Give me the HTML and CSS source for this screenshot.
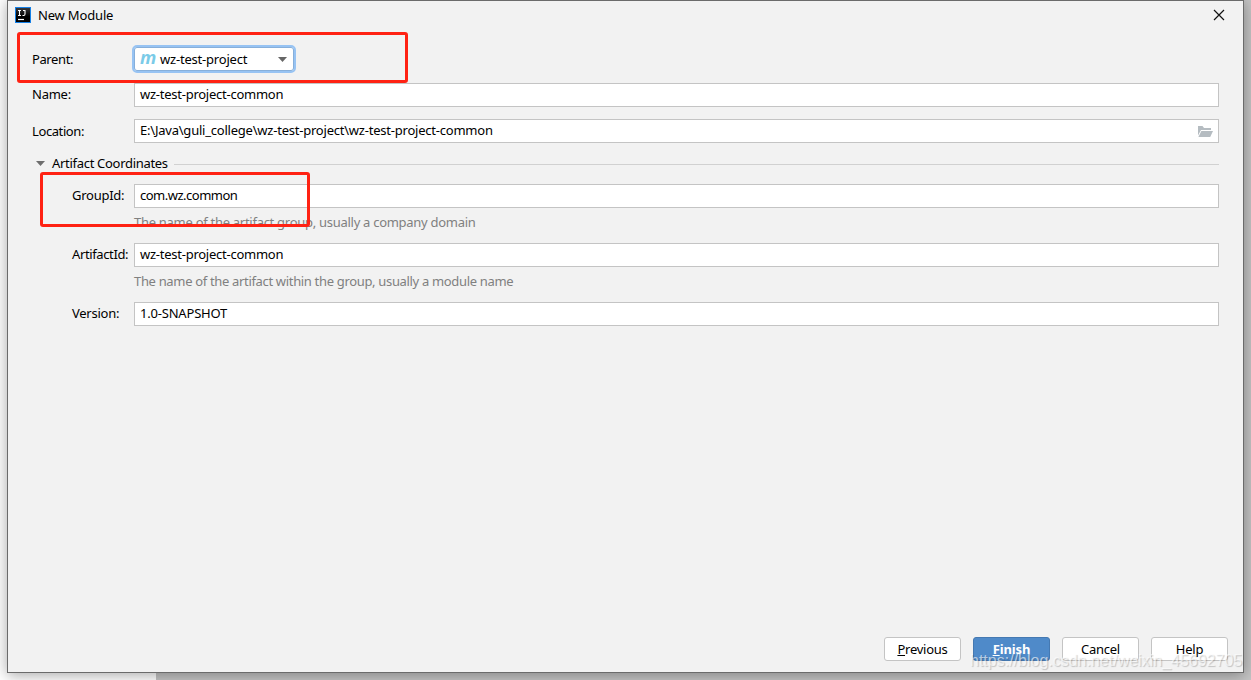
FILE: index.html
```html
<!DOCTYPE html>
<html lang="en">
<head>
    <meta charset="UTF-8">
    <title>New Module</title>
    <link rel="stylesheet" href="styles.css">
</head>
<body>
    <div class="dialog">
        <!-- Title bar -->
        <div class="title-bar">
            <svg class="app-icon" width="16" height="16" viewBox="0 0 16 16">
                <defs>
                    <linearGradient id="logo" x1="0" y1="0" x2="0" y2="1">
                        <stop offset="0" stop-color="#3a3a3c"/>
                        <stop offset="0.6" stop-color="#000"/>
                    </linearGradient>
                </defs>
                <rect x="0.5" y="0.5" width="15" height="15" fill="url(#logo)" stroke="#1580e6"/>
                <path d="M3 3.5h3M4.5 3.5v5M3 8.5h3M8 3.5h2.5M10 3.5v3.6q0 1.4-1.3 1.4H7.5" fill="none" stroke="#fff" stroke-width="1.1"/>
                <path d="M3 12.5h6" stroke="#fff" stroke-width="1.2"/>
            </svg>
            <span class="title">New Module</span>
            <svg class="close" width="12" height="12" viewBox="0 0 12 12">
                <path d="M1 1l10 10M11 1L1 11" stroke="#111" stroke-width="1.2"/>
            </svg>
        </div>

        <!-- Form -->
        <div class="form">
            <div class="row parent-row">
                <label><span class="t-parent">Parent:</span></label>
                <div class="combo">
                    <span class="maven">m</span>
                    <span class="t-combo">wz-test-project</span>
                    <svg class="arrow" width="9" height="5" viewBox="0 0 9 5"><path d="M0 0h9L4.5 5z" fill="#666"/></svg>
                </div>
            </div>
            <div class="row name-row">
                <label><span class="t-name">Name:</span></label>
                <div class="field"><span class="t-common">wz-test-project-common</span></div>
            </div>
            <div class="row location-row">
                <label><span class="t-location">Location:</span></label>
                <div class="field">
                    <span class="t-path">E:\Java\guli_college\wz-test-project\wz-test-project-common</span>
                    <svg class="folder" width="15" height="11" viewBox="0 0 15 11">
                        <path d="M0 0h4.5l1.5 2h7v2H3L0 9.6z" fill="#b5bcc1"/>
                        <path d="M3.4 5H15l-2.8 6H0.4z" fill="#b5bcc1"/>
                    </svg>
                </div>
            </div>

            <div class="section">
                <svg width="9" height="5" viewBox="0 0 9 5"><path d="M0 0h9L4.5 5z" fill="#6e6e6e"/></svg>
                <span class="t-section">Artifact Coordinates</span>
                <div class="line"></div>
            </div>

            <div class="row nested">
                <label><span class="t-group">GroupId:</span></label>
                <div class="field"><span class="t-com">com.wz.common</span></div>
            </div>
            <div class="hint"><span class="t-hint1">The name of the artifact group, usually a company domain</span></div>
            <div class="row nested">
                <label><span class="t-artifact">ArtifactId:</span></label>
                <div class="field"><span class="t-common">wz-test-project-common</span></div>
            </div>
            <div class="hint"><span class="t-hint2">The name of the artifact within the group, usually a module name</span></div>
            <div class="row nested">
                <label><span class="t-version">Version:</span></label>
                <div class="field"><span class="t-snapshot">1.0-SNAPSHOT</span></div>
            </div>
        </div>

        <!-- Buttons -->
        <div class="buttons">
            <button><u>P</u>revious</button>
            <button class="primary"><u>F</u>inish</button>
            <button>Cancel</button>
            <button>Help</button>
        </div>
    </div>

    <!-- Red marks over the form -->
    <div class="mark mark-parent"></div>
    <div class="mark mark-group"></div>

    <div class="watermark">https://blog.csdn.net/weixin_45692705</div>
</body>
</html>
```

FILE: styles.css
```css
* {
    box-sizing: border-box;
}

body {
    margin: 0;
    width: 1251px;
    height: 680px;
    padding-left: 7px;
    position: relative;
    overflow: hidden;
    font-family: "Noto Sans", sans-serif;
    font-size: 13px;
    line-height: 18px;
    letter-spacing: -0.25px;
    color: #000;
    background: linear-gradient(to right, #fff 156px, #c4c4c4 156px);
}

.dialog {
    width: 1237px;
    height: 673px;
    display: flex;
    flex-direction: column;
    background: #f2f2f2;
    border: 1px solid #6b6b6b;
    box-shadow: 0 2px 14px rgba(0, 0, 0, 0.35);
}

span {
    white-space: nowrap;
}

/* Title bar */
.title-bar {
    height: 29px;
    display: flex;
    align-items: center;
    padding: 0 18px 1px 7px;
}

.title {
    margin-left: 7px;
    flex: 1;
    letter-spacing: -0.17px;
}

/* Form */
.form {
    flex: 1;
    padding: 15px 24px 0;
}

.row {
    display: grid;
    grid-template-columns: 102px 1fr;
    align-items: center;
}

.name-row label,
.nested label {
    padding-bottom: 2px;
}

.nested label {
    padding-left: 40px;
}

.parent-row {
    margin-bottom: 10px;
}

.name-row {
    margin-bottom: 12px;
}

.field {
    height: 24px;
    display: flex;
    align-items: center;
    justify-content: space-between;
    padding: 0 5px;
    background: #fff;
    border: 1px solid #c4c4c4;
}

.field span {
    padding-bottom: 2px;
}

.combo {
    width: 164px;
    height: 28px;
    margin-left: -2px;
    display: flex;
    align-items: center;
    padding: 0 7px 0 6px;
    background: #fff;
    border: 2px solid #97c3f3;
    border-radius: 5px;
    box-shadow: inset 0 0 0 1px #87afda;
}

.maven {
    width: 20px;
    font-family: "Open Sans", sans-serif;
    font-size: 18px;
    font-weight: bold;
    font-style: italic;
    color: #7acbe8;
    line-height: 18px;
    padding-bottom: 5px;
}

.arrow {
    margin-left: auto;
}

.section {
    height: 41px;
    display: flex;
    align-items: center;
    padding-left: 4px;
}

.section svg {
    margin-left: -0.5px;
}

.t-section {
    margin: 0 6px 0 7.5px;
    padding-bottom: 2px;
}

.line {
    flex: 1;
    height: 1px;
    margin-top: 1px;
    background: #d1d1d1;
}

.hint {
    height: 35px;
    padding: 5px 0 0 102px;
    color: #808080;
}

/* Tracking of the single texts */
.t-parent,
.t-location {
    letter-spacing: -0.4px;
}

.t-combo {
    letter-spacing: -0.2px;
}

.t-path {
    letter-spacing: -0.22px;
}

.t-section {
    letter-spacing: -0.3px;
}

.t-com {
    letter-spacing: -0.5px;
}

.t-artifact {
    letter-spacing: -0.38px;
}

.t-hint1 {
    letter-spacing: -0.28px;
}

.t-hint2 {
    letter-spacing: -0.33px;
}

.t-snapshot {
    letter-spacing: -0.2px;
}

/* Buttons */
.buttons {
    display: flex;
    justify-content: flex-end;
    gap: 12px;
    padding: 0 15px 11px 0;
}

button {
    width: 77px;
    height: 24px;
    padding: 0;
    font: inherit;
    letter-spacing: -0.25px;
    color: #000;
    background: #fff;
    border: 1px solid #c4c4c4;
    border-radius: 3px;
}

.primary {
    color: #fff;
    font-weight: bold;
    letter-spacing: -0.1px;
    background: #4f8ac9;
    border-color: #4579b2;
}

/* Overlays */
.mark {
    position: absolute;
    border: 3px solid #ff2213;
    border-radius: 3px;
}

.mark-parent {
    left: 17px;
    top: 32px;
    width: 391px;
    height: 51px;
}

.mark-group {
    left: 40px;
    top: 172px;
    width: 270px;
    height: 55px;
}

.watermark {
    position: absolute;
    left: 970px;
    top: 652px;
    font-family: "Liberation Sans", sans-serif;
    font-size: 16px;
    letter-spacing: 0;
    white-space: nowrap;
    color: rgba(255, 255, 255, 0.6);
    text-shadow: 1px 1px 1px rgba(0, 0, 0, 0.2);
}
```
